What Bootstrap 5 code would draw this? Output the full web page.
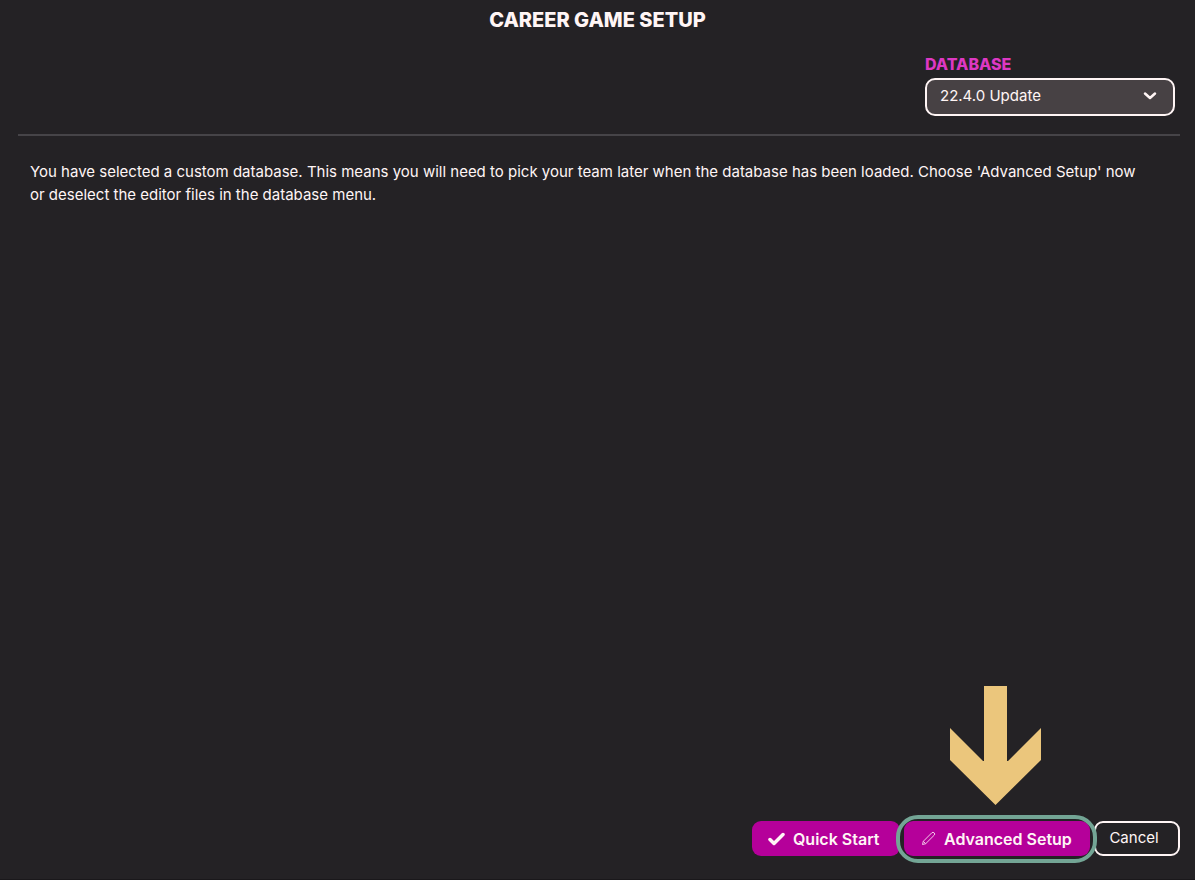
<!DOCTYPE html>
<html lang="en">
<head>
<meta charset="utf-8">
<meta name="viewport" content="width=device-width, initial-scale=1">
<title>Career Game Setup</title>
<link rel="stylesheet" href="https://cdn.jsdelivr.net/npm/bootstrap@5.3.0/dist/css/bootstrap.min.css">
<style>
  body { background: #242225; color: #fff5f5; font-family: Inter, "Liberation Sans", sans-serif; font-size: 15px; line-height: 23px; }
  .setup-screen { border-bottom: 1px solid #1a181b; }
  .setup-title { font-size: 20px; line-height: 24px; font-weight: 800; }
  .setup-bar { padding: 20px 20px 18px; }
  .db-field { width: 250px; }
  .db-label { color: #dd38c3; font-weight: 800; font-size: 16px; line-height: 24px; padding-bottom: 2px; }
  .db-select { height: 38px; padding: 0 40px 1px 13px; color: #fff5f5; border: 2px solid #fff5f5; border-radius: 10px; font-size: 15px;
    background-color: #474144;
    background-image: url("data:image/svg+xml,%3Csvg xmlns='http://www.w3.org/2000/svg' viewBox='0 0 16 16'%3E%3Cpath d='M3 5.500l5 4.500 5-4.500' fill='none' stroke='%23fff5f5' stroke-width='2.500' stroke-linecap='round' stroke-linejoin='round'/%3E%3C/svg%3E");
    background-size: 16px 16px; background-position: right 15px top 8px; }
  .rule { height: 2px; margin: 0 15px 0 18px; background: #464448; }
  .message { padding: 24px 48px 24px 30px; }
  .actions { padding: 0 15px 23px; gap: 4px; }
  .action { height: 35px; border: 0; border-radius: 9px; color: #fff5f5; background: #b5009a; font-size: 16px; font-weight: 600; white-space: nowrap; }
  .action:hover { color: #fff; background: #c80aab; }
  .quick { width: 148px; padding: 0 0 0 16px; }
  .advanced { width: 186px; padding: 0 0 0 17px; }
  .cancel { width: 86px; padding: 0 6px 0 0; border: 2px solid #fff5f5; background: transparent; font-size: 15px; font-weight: 400; }
  .ring { inset: -6px -7px -7px -8px; border: 4px solid #73a595; border-radius: 22px; pointer-events: none; z-index: 1; }
  .pointer { bottom: 51px; left: 46px; pointer-events: none; }
</style>
</head>
<body>
<div class="setup-screen d-flex flex-column min-vh-100">
  <header>
    <h1 class="setup-title text-center mb-0 pt-2">CAREER GAME SETUP</h1>
    <div class="setup-bar d-flex justify-content-end">
      <div class="db-field">
        <label class="db-label d-block" for="database">DATABASE</label>
        <select class="db-select form-select shadow-none" id="database"><option>22.4.0 Update</option></select>
      </div>
    </div>
    <div class="rule"></div>
  </header>
  <main class="flex-grow-1">
    <p class="message mb-0">You have selected a custom database. This means you will need to pick your team later when the database has been loaded. Choose 'Advanced Setup' now or deselect the editor files in the database menu.</p>
  </main>
  <footer class="actions d-flex justify-content-end">
    <button type="button" class="btn action quick d-flex align-items-center gap-2">
      <svg width="17" height="14" viewBox="0 0 17 14" aria-hidden="true"><path d="M2 7.500 6 11.500 15 2.500" fill="none" stroke="#fff5f5" stroke-width="3.500" stroke-linejoin="round" stroke-linecap="round"/></svg>
      <span>Quick Start</span>
    </button>
    <div class="position-relative">
      <button type="button" class="btn action advanced d-flex align-items-center gap-2">
        <svg width="15" height="15" viewBox="0 0 15 15" aria-hidden="true"><path d="M1.500 13.500 2.300 10.300 10.900 1.700Q12 .8 13.200 1.900T13.300 4.100L4.700 12.700ZM2.300 10.300 4.700 12.700" fill="none" stroke="#f3cbe9" stroke-width="1" stroke-linejoin="round"/></svg>
        <span>Advanced Setup</span>
      </button>
      <div class="ring position-absolute"></div>
      <svg class="pointer position-absolute" width="91" height="119" viewBox="0 0 91 119" aria-hidden="true"><path d="M34 0H57V75H58L91 42V74L45.500 119 0 74V42L33 75H34Z" fill="#ebc67c"/></svg>
    </div>
    <button type="button" class="btn action cancel">Cancel</button>
  </footer>
</div>
<script src="https://cdn.jsdelivr.net/npm/bootstrap@5.3.0/dist/js/bootstrap.bundle.min.js"></script>
</body>
</html>
